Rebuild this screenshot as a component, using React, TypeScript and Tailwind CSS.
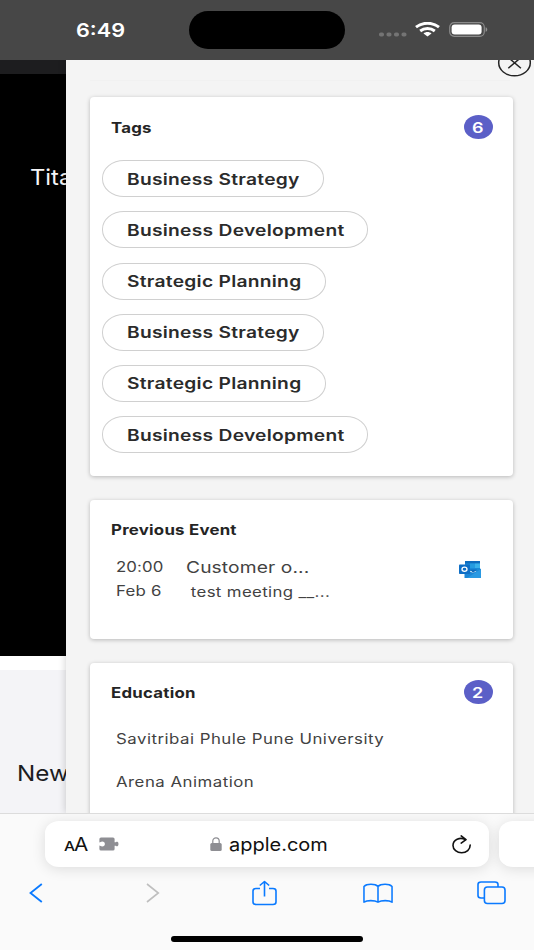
import type { ReactNode } from "react";

const tags = [
  { label: "Business Strategy", width: "w-[222px]" },
  { label: "Business Development", width: "w-[266px]" },
  { label: "Strategic Planning", width: "w-[224px]" },
  { label: "Business Strategy", width: "w-[222px]" },
  { label: "Strategic Planning", width: "w-[224px]" },
  { label: "Business Development", width: "w-[266px]" },
];

const schools = ["Savitribai Phule Pune University", "Arena Animation"];

// Horizontally expanded text, anchored at its left edge
function Wide({ children, scale = "scale-x-[1.2]", className = "" }: {
  children: ReactNode;
  scale?: string;
  className?: string;
}) {
  return (
    <span className={`inline-block origin-left whitespace-nowrap ${scale} ${className}`}>
      {children}
    </span>
  );
}

function StatusBar() {
  return (
    <header className="flex h-[60px] shrink-0 items-center bg-[#474747] text-white">
      <div className="w-[189px] pt-px pl-[76px]">
        <Wide scale="scale-x-[1.14]" className="text-[19px] leading-none font-semibold">6:49</Wide>
      </div>
      <div className="h-[38px] w-[156px] rounded-full bg-black" />
      <div className="flex flex-1 items-center pl-[34px]">
        <svg width="28" height="15" viewBox="0 0 28 15" fill="#747474">
          <rect x="0" y="9.5" width="5" height="4" rx="1.8" />
          <rect x="7.5" y="9.5" width="5" height="4" rx="1.8" />
          <rect x="15" y="9.5" width="5" height="4" rx="1.8" />
          <rect x="22.5" y="9.5" width="5" height="4" rx="1.8" />
        </svg>
        <svg className="-mt-px ml-2" width="25" height="15" viewBox="0 0 25 15" fill="none" stroke="#fff" strokeWidth="2.9">
          <path d="M1 5.2C7.5-.1 17.5-.1 24 5.2" />
          <path d="M5.2 9c4.2-3.4 10.4-3.4 14.6 0" />
          <path d="M12.5 14.6 8.5 11.6c2-2 6-2 8 0z" fill="#fff" stroke="none" />
        </svg>
        <svg className="-mt-px ml-[9px]" width="39" height="15" viewBox="0 0 39 15">
          <rect x="0.7" y="0.7" width="34.6" height="13.6" rx="4.5" fill="none" stroke="#8a8a8a" strokeWidth="1.2" />
          <rect x="2.6" y="2.4" width="30" height="10.2" rx="3" fill="#fff" />
          <path d="M36.6 5.2c2.2.6 2.2 4 0 4.6z" fill="#929292" />
        </svg>
      </div>
    </header>
  );
}

function PageBehind() {
  return (
    <div className="flex w-[66px] shrink-0 flex-col overflow-hidden">
      <div className="h-[14px] shrink-0 bg-[#1d1d1f]" />
      <div className="h-[582px] shrink-0 bg-black pt-[90px] pl-[30px] text-[#f5f5f7]">
        <Wide scale="scale-x-[1.08]" className="text-[22px] leading-[26px]">Tita</Wide>
      </div>
      <div className="h-[14px] shrink-0 bg-white" />
      <div className="flex-1 bg-[#f4f4f7] pt-[89px] pl-[17px] text-[#1d1d1f]">
        <Wide scale="scale-x-[1.1]" className="text-[22px] leading-[28px]">New</Wide>
      </div>
    </div>
  );
}

function Card({ title, count, className, headerClass = "h-[58px]", children }: {
  title: string;
  count?: number;
  className: string;
  headerClass?: string;
  children: ReactNode;
}) {
  return (
    <section className={`shrink-0 rounded-[4px] bg-white shadow-[0_1px_4px_rgba(0,0,0,0.25)] ${className}`}>
      <div className={`flex items-center justify-between pr-[20.5px] pl-[20.5px] ${headerClass}`}>
        <Wide className="text-[14px] font-bold tracking-[0.2px] text-[#242424]">{title}</Wide>
        {count !== undefined && (
          <span className="flex h-6 w-[29px] items-center justify-center rounded-[50%] bg-[#5b5fc7] text-white">
            <span className="scale-x-[1.2] text-[15px] leading-none font-semibold">{count}</span>
          </span>
        )}
      </div>
      {children}
    </section>
  );
}

function OutlookIcon() {
  return (
    <svg width="22" height="17" viewBox="0 0 22 17">
      <rect x="6" y="0" width="15" height="10" rx="0.8" fill="#1a8ad8" />
      <rect x="6" y="0" width="15" height="2.5" fill="#0f6cbd" />
      <rect x="11" y="2.5" width="5" height="4.5" fill="#259be0" />
      <rect x="16" y="2.5" width="5" height="4.5" fill="#3ab2ea" />
      <path d="M5.5 7.5 14 12 22 7.5V17H5.5z" fill="#1b86d6" />
      <path d="M22 8v9H8z" fill="#2a99e2" />
      <path d="M11 8.5h7l-4 3.500z" fill="#0f6cbd" />
      <rect x="0" y="3.5" width="11" height="9.5" rx="0.8" fill="#0f6fc6" />
      <ellipse cx="5.5" cy="8.3" rx="2.5" ry="2.1" fill="none" stroke="#fff" strokeWidth="1.3" />
    </svg>
  );
}

function Panel() {
  return (
    <main className="relative flex flex-1 flex-col overflow-hidden bg-[#f4f4f4] shadow-[0_0_8px_rgba(0,0,0,0.2)]">
      <svg className="absolute -top-3 right-[2px]" width="35" height="30" viewBox="0 0 35 30" fill="none" stroke="#242424" strokeWidth="1.5">
        <ellipse cx="17.5" cy="14.7" rx="15.8" ry="13.1" />
        <path d="M11.3 9.5l12.6 10.8M23.9 9.5L11.3 20.3" />
      </svg>
      <div className="mx-6 h-[21px] shrink-0 border-b border-[#f1f1f1]" />
      <div className="flex flex-col gap-6 pt-4 pr-[21px] pl-6">
        <Card title="Tags" count={6} className="h-[379px]" headerClass="h-[60px]">
          <ul className="flex flex-col gap-[14.2px] pt-[3.2px] pl-3">
            {tags.map((tag, index) => (
              <li
                key={index}
                className={`flex h-[37px] items-center rounded-[22px/18px] border border-[#d0d0d0] pl-[23.5px] ${tag.width}`}
              >
                <Wide className="text-[16px] font-semibold tracking-[0.23px] text-[#2b2b2b]">{tag.label}</Wide>
              </li>
            ))}
          </ul>
        </Card>
        <Card title="Previous Event" className="h-[139px]">
          <div className="flex pl-[26px] text-[#424242]">
            <div className="-mt-[3px] flex w-[70px] flex-col text-[14px] leading-6">
              <Wide className="tracking-[0.1px]">20:00</Wide>
              <Wide className="tracking-[0.2px]">Feb 6</Wide>
            </div>
            <div className="-mt-[3px] flex flex-1 flex-col">
              <Wide className="text-[16px] leading-[25px] tracking-[0.1px]">Customer o...</Wide>
              <Wide className="pl-1 text-[14px] leading-6 tracking-[0.3px]">test meeting __...</Wide>
            </div>
            <div className="pt-[3px] pr-8">
              <OutlookIcon />
            </div>
          </div>
        </Card>
        <Card title="Education" count={2} className="h-[200px]">
          <ul className="-mt-[4px] flex flex-col gap-[22px] pt-[11px] pl-[26px] text-[14px] leading-[21px] tracking-[0.41px] text-[#424242]">
            {schools.map((school) => (
              <li key={school} className="flex h-[21px]">
                <Wide>{school}</Wide>
              </li>
            ))}
          </ul>
        </Card>
      </div>
    </main>
  );
}

function BrowserBar() {
  return (
    <footer className="flex h-[137px] shrink-0 flex-col overflow-hidden border-t border-[#dcdcdc] bg-[#fafafa]">
      <div className="flex gap-[10px] pt-[7px] pl-[45px]">
        <div className="flex h-[46px] w-[444px] shrink-0 items-center rounded-[14px/12px] bg-white pr-[17px] pl-[19px] text-[#111] shadow-[0_2px_14px_rgba(0,0,0,0.12)]">
          <div className="flex w-[35px] items-baseline pt-px">
            <Wide className="w-[10px] text-[13px] font-medium">A</Wide>
            <Wide className="text-[18px]" scale="scale-x-[1.15]">A</Wide>
          </div>
          <svg width="20" height="14" viewBox="0 0 20 14" fill="#8e8e93">
            <path d="M2 .5h12q1.6 0 1.6 1.5v3.2c1.2.6 1.6-.8 2.7-.5 1.6.5 1.6 4.1 0 4.6-1.1.3-1.5-1.1-2.7-.5V12q0 1.500-1.600 1.500H2Q.4 13.500.4 12V8.400c1 0 1.400 1 2.800 1 3.600 0 3.600-5 0-5-1.400 0-1.800 1-2.800 1V2Q.4.5 2 .5z" />
          </svg>
          <svg className="ml-[91px]" width="12" height="14" viewBox="0 0 12 14">
            <path d="M2.8 7V4c0-4.300 6.400-4.300 6.400 0v3" fill="none" stroke="#8e8e93" strokeWidth="1.2" />
            <rect x="0.3" y="6" width="11.4" height="8" rx="1.5" fill="#8e8e93" />
          </svg>
          <Wide scale="scale-x-[1.11]" className="ml-[7px] pt-px text-[18px]">apple.com</Wide>
          <svg className="ml-auto" width="21" height="19" viewBox="0 0 21 19" fill="none" stroke="#111" strokeWidth="1.6" strokeLinecap="round" strokeLinejoin="round">
            <path d="M14.2 4.600C9 1.600 2 4.800 2 10.400c0 4.200 4 7.400 8.600 7.400 4.900 0 8.600-3.300 8.600-7.800" />
            <path d="M10.2.9l4.800 3.800-4.800 3.400" />
          </svg>
        </div>
        <div className="h-[46px] w-[60px] shrink-0 rounded-[14px/12px] bg-white shadow-[0_2px_14px_rgba(0,0,0,0.12)]" />
      </div>
      <nav className="flex h-[52px] items-center pl-[29px] text-[#0a7aff]">
        <svg width="14" height="20" viewBox="0 0 14 20" fill="none" stroke="currentColor" strokeWidth="1.8">
          <path d="M12.8 1L1.500 10l11.300 9" />
        </svg>
        <svg className="ml-[103px] text-[#bfbfbf]" width="14" height="20" viewBox="0 0 14 20" fill="none" stroke="currentColor" strokeWidth="1.6">
          <path d="M1 1l11.300 9L1 19" />
        </svg>
        <svg className="ml-[92px]" width="25" height="26" viewBox="0 0 25 26" fill="none" stroke="currentColor" strokeWidth="1.6" strokeLinejoin="round">
          <path d="M8 8.500H4Q1 8.500 1 11v11q0 2.500 3 2.500h17q3 0 3-2.500V11q0-2.500-3-2.500h-4" />
          <path d="M12.500 16.500V1.500M7.800 5.500l4.700-4 4.700 4" />
        </svg>
        <svg className="ml-[86px]" width="30" height="21" viewBox="0 0 31 21" fill="none" stroke="currentColor" strokeWidth="1.6" strokeLinejoin="round">
          <path d="M15.500 3.200C12.500.3 4 .2 1 3.200v16.300c3-2.200 11-2.200 14.500 0 3.500-2.200 11.500-2.200 14.500 0V3.200c-3-3-11.500-2.900-14.500 0zM15.500 3.200v16.300" />
        </svg>
        <svg className="ml-[84px]" width="29" height="24" viewBox="0 0 29 24" fill="none" stroke="currentColor" strokeWidth="1.6">
          <path d="M7 17H4q-3 0-3-2.500v-11Q1 1 4 1h14q3 0 3 2.500V6" />
          <rect x="7.4" y="6" width="20.6" height="16.5" rx="3" />
        </svg>
      </nav>
      <div className="mt-[17px] ml-[171px] h-[6px] w-[192px] rounded-full bg-black" />
    </footer>
  );
}

export default function App() {
  return (
    <div className="flex h-[950px] w-[534px] flex-col overflow-hidden bg-[#fafafa] font-['Inter','Liberation_Sans',sans-serif]">
      <StatusBar />
      <div className="flex h-[753px] shrink-0 overflow-hidden">
        <PageBehind />
        <Panel />
      </div>
      <BrowserBar />
    </div>
  );
}
